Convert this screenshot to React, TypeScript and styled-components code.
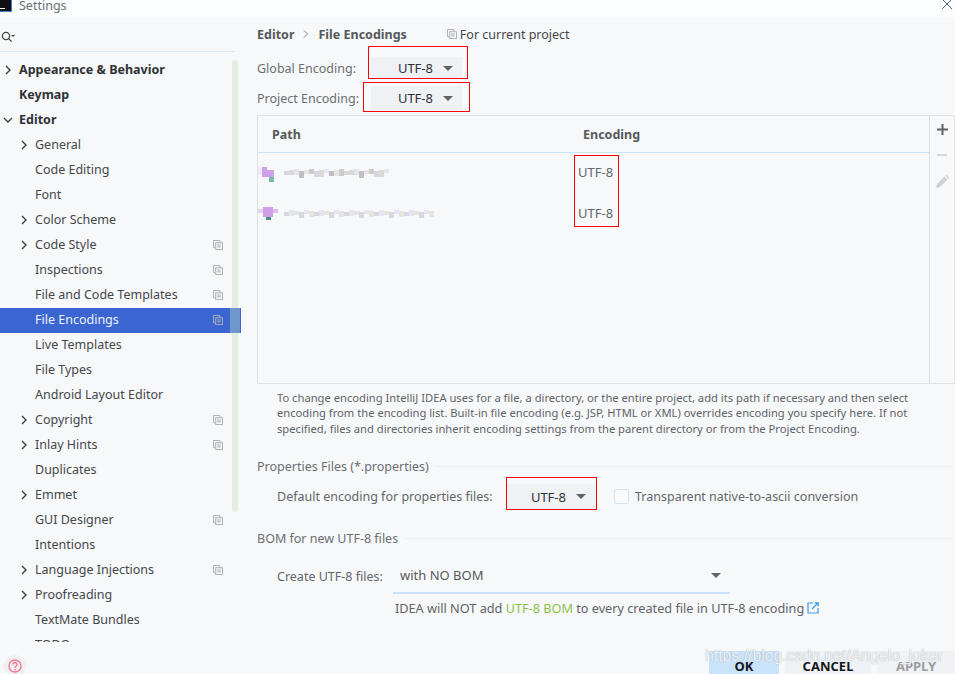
import React from "react";
import styled, { createGlobalStyle } from "styled-components";

const Global = createGlobalStyle`
  html, body { margin: 0; padding: 0; background: #f7f8fa; }
  * { box-sizing: border-box; }
`;

const Window = styled.div`
  position: relative;
  width: 955px;
  height: 674px;
  overflow: hidden;
  display: flex;
  flex-direction: column;
  background: #f7f8fa;
  font-family: "Noto Sans", "Open Sans", sans-serif;
  font-size: 12.5px;
  color: #3d4043;
`;
const TitleBar = styled.div`
  height: 18px;
  flex: none;
  background: #fcfdfe;
  display: flex;
  align-items: center;
  padding-right: 3px;
  overflow: hidden;
`;
const AppLogo = styled.div`
  width: 12px;
  height: 12px;
  margin-top: -7px;
  background: #111;
  border-right: 1px solid #3b7fd0;
  border-bottom: 1px solid #3b7fd0;
  flex: none;
  display: flex;
  align-items: flex-end;
  padding: 0 0 2px 0;
`;
const LogoBar = styled.div`
  width: 5px;
  height: 1px;
  background: #fff;
`;
const TitleText = styled.span`
  margin-left: 7px;
  margin-top: -8px;
  font-size: 12.5px;
  color: #6a7076;
`;
const CloseBox = styled.div`
  margin-left: auto;
  margin-top: -16px;
  height: 10px;
  color: #4f6670;
`;
const Main = styled.div`
  flex: 1;
  min-height: 0;
  display: flex;
`;
const Sidebar = styled.div`
  position: relative;
  width: 241px;
  flex: none;
  display: flex;
  flex-direction: column;
`;
const SearchRow = styled.div`
  height: 34px;
  flex: none;
  border-bottom: 1px solid #d5e6f6;
  display: flex;
  align-items: center;
  padding: 5px 0 0 1px;
  width: 234px;
  color: #43474b;
`;
const Tree = styled.div`
  flex: 1;
  min-height: 0;
  overflow: hidden;
  margin-top: 6px;
  margin-bottom: 32px;
`;
const Row = styled.div<{ $indent: number; $selected?: boolean; $bold?: boolean }>`
  height: 25px;
  display: flex;
  align-items: center;
  padding: 0 18px 2px ${(p) => p.$indent}px;
  background: ${(p) => (p.$selected ? "#3b66d2" : "transparent")};
  color: ${(p) => (p.$selected ? "#eef3fc" : p.$bold ? "#2f3236" : "#44474a")};
  font-weight: ${(p) => (p.$bold ? 700 : 400)};
  white-space: nowrap;
`;
const Arrow = styled.span`
  width: 16px;
  flex: none;
  display: flex;
  align-items: center;
  color: #3c3f42;
`;
const RowLabel = styled.span`
  flex: 1;
`;
const ProjectMark = styled.span`
  display: flex;
  color: #a9b0b6;
`;
const ScrollThumb = styled.div`
  position: absolute;
  left: 232px;
  top: 42px;
  width: 6px;
  height: 452px;
  border-radius: 3px;
  background: #e3efde;
`;
const SelectedThumb = styled.div`
  position: absolute;
  left: 230px;
  top: 290px;
  width: 10px;
  height: 25px;
  background: #6f97cc;
`;
const HelpButton = styled.div`
  position: absolute;
  left: 4px;
  top: 655px;
  width: 22px;
  height: 22px;
  border-radius: 50%;
  background: #eef0f4;
  display: flex;
  align-items: center;
  justify-content: center;
  color: #f4778f;
`;
const Content = styled.div`
  flex: 1;
  min-width: 0;
  display: flex;
  flex-direction: column;
  padding: 7px 0 0 16px;
`;
const Breadcrumb = styled.div`
  display: flex;
  align-items: center;
  height: 18px;
  font-weight: 700;
  color: #55585c;
`;
const CrumbSep = styled.span`
  display: flex;
  margin: 0 9px 0 9px;
  color: #808488;
`;
const ForProject = styled.span`
  display: flex;
  align-items: center;
  gap: 3px;
  margin-left: 40px;
  font-weight: 400;
  color: #44474a;
`;
const EncodingRow = styled.div<{ $top: number }>`
  display: flex;
  align-items: center;
  margin-top: ${(p) => p.$top}px;
  color: #6b6f73;
`;
const FieldLabel = styled.span<{ $width: number }>`
  width: ${(p) => p.$width}px;
  flex: none;
  white-space: nowrap;
`;
const Combo = styled.div<{ $width: number; $height: number; $pad: number }>`
  width: ${(p) => p.$width}px;
  height: ${(p) => p.$height}px;
  flex: none;
  background: #eff1f5;
  display: flex;
  align-items: center;
  justify-content: flex-end;
  gap: 10px;
  padding-right: ${(p) => p.$pad}px;
  font-size: 13px;
  color: #2f3236;
`;
const Caret = styled.span`
  width: 0;
  height: 0;
  border-left: 5px solid transparent;
  border-right: 5px solid transparent;
  border-top: 5px solid #5f6266;
  flex: none;
`;
const TablePanel = styled.div`
  margin-top: 5px;
  height: 269px;
  flex: none;
  display: flex;
  border: 1px solid #e0e1e3;
`;
const TableMain = styled.div`
  flex: 1;
  min-width: 0;
  display: flex;
  flex-direction: column;
  border-right: 1px solid #dcdddf;
`;
const TableHead = styled.div`
  height: 37px;
  flex: none;
  display: flex;
  align-items: center;
  border-bottom: 1px solid #cbe3f7;
  font-weight: 700;
  color: #55585c;
`;
const PathHead = styled.span`
  width: 325px;
  padding-left: 14px;
  flex: none;
`;
const TableRow = styled.div<{ $height: number }>`
  height: ${(p) => p.$height}px;
  display: flex;
  align-items: center;
  flex: none;
`;
const PathCell = styled.span`
  width: 320px;
  flex: none;
  display: flex;
`;
const EncodingCell = styled.span`
  font-size: 13px;
  color: #63676b;
`;
const TableTools = styled.div`
  width: 24px;
  flex: none;
  display: flex;
  flex-direction: column;
  align-items: center;
  padding-top: 3px;
  gap: 6px;
`;
const ToolIcon = styled.span`
  width: 20px;
  height: 20px;
  display: flex;
  align-items: center;
  justify-content: center;
`;
const HelpText = styled.p`
  margin: 6px 10px 0 20px;
  font-size: 11.2px;
  line-height: 15.4px;
  color: #5f6367;
`;
const SectionTitle = styled.div<{ $top: number }>`
  display: flex;
  align-items: center;
  gap: 6px;
  margin-top: ${(p) => p.$top}px;
  height: 18px;
  flex: none;
  color: #6b6f73;
  white-space: nowrap;
`;
const SectionRule = styled.span`
  flex: 1;
  height: 1px;
  background: #eff0f2;
`;
const SectionRow = styled.div<{ $top: number }>`
  display: flex;
  align-items: center;
  flex: none;
  margin-top: ${(p) => p.$top}px;
  padding-left: 20px;
  color: #63676b;
`;
const CheckBox = styled.span`
  width: 15px;
  height: 15px;
  flex: none;
  margin: 0 6px 0 17px;
  border: 1px solid #d2e5f7;
  border-radius: 2px;
  background: #f9fafc;
`;
const WideCombo = styled.div`
  width: 337px;
  height: 36px;
  flex: none;
  display: flex;
  align-items: center;
  justify-content: space-between;
  padding: 0 9px 0 7px;
  border-bottom: 2px solid #c5e1fb;
  font-size: 13px;
  color: #55585c;
`;
const Note = styled.div`
  margin: 5px 0 0 138px;
  display: flex;
  align-items: center;
  flex: none;
  gap: 3px;
  font-size: 12.7px;
  color: #5f6367;
  white-space: nowrap;
`;
const Green = styled.span`
  color: #8bc34a;
`;
const LinkIcon = styled.span`
  display: flex;
  color: #3d97e6;
`;
const Footer = styled.div`
  margin-top: auto;
  display: flex;
  justify-content: flex-end;
  gap: 6px;
  height: 23px;
  flex: none;
`;
const FootButton = styled.div<{ $width: number; $kind: "ok" | "cancel" | "apply" }>`
  width: ${(p) => p.$width}px;
  height: 23px;
  display: flex;
  align-items: flex-start;
  justify-content: center;
  padding-top: 6px;
  font-weight: 700;
  font-size: 13px;
  line-height: 18px;
  background: ${(p) => (p.$kind === "ok" ? "#c9e3fc" : p.$kind === "cancel" ? "#eef1f5" : "#f0f2f5")};
  color: ${(p) => (p.$kind === "apply" ? "#9a9c9f" : "#15171a")};
`;
const Watermark = styled.div`
  position: absolute;
  left: 705px;
  top: 646px;
  font-family: "Liberation Sans", Arial, sans-serif;
  font-size: 15.8px;
  line-height: 20px;
  color: rgba(255, 255, 255, 0.85);
  text-shadow: 0 0 1px rgba(120, 130, 140, 0.75);
  white-space: nowrap;
`;
const RedBox = styled.div<{ $l: number; $t: number; $w: number; $h: number }>`
  position: absolute;
  left: ${(p) => p.$l}px;
  top: ${(p) => p.$t}px;
  width: ${(p) => p.$w}px;
  height: ${(p) => p.$h}px;
  border: 1px solid #f00;
`;

const Chevron = ({ down }: { down?: boolean }) => (
  <svg width="10" height="10" viewBox="0 0 10 10" fill="none" stroke="currentColor" strokeWidth="1.4">
    {down ? <path d="M1 3l4 4 4-4" /> : <path d="M3 1l4 4-4 4" />}
  </svg>
);
const ProjectIcon = () => (
  <svg width="10" height="10" viewBox="0 0 11 11" fill="none" stroke="currentColor" strokeWidth="1.1">
    <path d="M2.500 8.500h-2v-8h7v2" />
    <rect x="3" y="3" width="7.500" height="7.500" />
    <path d="M4.500 5.500h4M4.500 7.500h4" />
  </svg>
);
const Blur = ({ width, seed, wide }: { width: number; seed: number; wide?: boolean }) => {
  const colors = ["#cdcad0", "#d5d8df", "#dcd8d6", "#e3e6ec", "#c2bec5", "#e8e3df"];
  const cells = Array.from({ length: Math.floor(width / 5) }, (_, i) => i);
  return (
    <svg width={width + 26} height="22" viewBox={`0 0 ${width + 26} 22`} shapeRendering="crispEdges">
      {wide ? (
        <>
          <rect x="0" y="7" width="5" height="4" fill="#e6d3f2" />
          <rect x="5" y="5" width="10" height="10" fill="#cf9fe8" />
          <rect x="15" y="7" width="5" height="4" fill="#dcbdf0" />
          <rect x="8" y="15" width="5" height="3" fill="#4f8c88" />
        </>
      ) : (
        <>
          <rect x="0" y="6" width="4" height="8" fill="#f0ebf4" />
          <rect x="4" y="6" width="5" height="10" fill="#cf9fe8" />
          <rect x="9" y="9" width="7" height="7" fill="#cf9fe8" />
          <rect x="11" y="16" width="5" height="5" fill="#79b8ad" />
        </>
      )}
      {cells.map((i) => (
        <rect
          key={i}
          x={26 + i * 5}
          y={10 - ((i * seed) % 3)}
          width="5"
          height={4 + ((i * seed) % 4)}
          fill={colors[(i * seed + 1) % colors.length]}
        />
      ))}
    </svg>
  );
};

type Item = { label: string; indent: number; arrow?: "r" | "d"; bold?: boolean; mark?: boolean; selected?: boolean };
const items: Item[] = [
  { label: "Appearance & Behavior", indent: 3, arrow: "r", bold: true },
  { label: "Keymap", indent: 19, bold: true },
  { label: "Editor", indent: 3, arrow: "d", bold: true },
  { label: "General", indent: 19, arrow: "r" },
  { label: "Code Editing", indent: 35 },
  { label: "Font", indent: 35 },
  { label: "Color Scheme", indent: 19, arrow: "r" },
  { label: "Code Style", indent: 19, arrow: "r", mark: true },
  { label: "Inspections", indent: 35, mark: true },
  { label: "File and Code Templates", indent: 35, mark: true },
  { label: "File Encodings", indent: 35, mark: true, selected: true },
  { label: "Live Templates", indent: 35 },
  { label: "File Types", indent: 35 },
  { label: "Android Layout Editor", indent: 35 },
  { label: "Copyright", indent: 19, arrow: "r", mark: true },
  { label: "Inlay Hints", indent: 19, arrow: "r", mark: true },
  { label: "Duplicates", indent: 35 },
  { label: "Emmet", indent: 19, arrow: "r" },
  { label: "GUI Designer", indent: 35, mark: true },
  { label: "Intentions", indent: 35 },
  { label: "Language Injections", indent: 19, arrow: "r", mark: true },
  { label: "Proofreading", indent: 19, arrow: "r" },
  { label: "TextMate Bundles", indent: 35 },
  { label: "TODO", indent: 35 },
];

export default function App() {
  return (
    <Window>
      <Global />
      <TitleBar>
        <AppLogo><LogoBar /></AppLogo>
        <TitleText>Settings</TitleText>
        <CloseBox>
          <svg width="10" height="10" viewBox="0 0 10 10" stroke="currentColor" strokeWidth="1" fill="none">
            <path d="M0 0l10 10M10 0L0 10" />
          </svg>
        </CloseBox>
      </TitleBar>
      <Main>
        <Sidebar>
          <SearchRow>
            <svg width="14" height="12" viewBox="0 0 14 12" fill="none" stroke="currentColor" strokeWidth="1.3">
              <circle cx="5" cy="5" r="3.6" />
              <path d="M7.600 7.600l3 3" />
              <path d="M10 4h4l-2 2z" fill="currentColor" stroke="none" />
            </svg>
          </SearchRow>
          <ScrollThumb />
          <Tree>
            {items.map((it) => (
              <Row key={it.label} $indent={it.indent} $bold={it.bold} $selected={it.selected}>
                {it.arrow && <Arrow><Chevron down={it.arrow === "d"} /></Arrow>}
                <RowLabel>{it.label}</RowLabel>
                {it.mark && <ProjectMark><ProjectIcon /></ProjectMark>}
              </Row>
            ))}
          </Tree>
          <SelectedThumb />
        </Sidebar>
        <Content>
          <Breadcrumb>
            Editor
            <CrumbSep>
              <svg width="6" height="8" viewBox="0 0 6 8" fill="none" stroke="currentColor"><path d="M1 0.500l3.500 3.500L1 7.500" /></svg>
            </CrumbSep>
            File Encodings
            <ForProject>
              <ProjectMark><ProjectIcon /></ProjectMark>
              For current project
            </ForProject>
          </Breadcrumb>
          <EncodingRow $top={14}>
            <FieldLabel $width={114}>Global Encoding:</FieldLabel>
            <Combo $width={91} $height={22} $pad={9}>UTF-8<Caret /></Combo>
          </EncodingRow>
          <EncodingRow $top={7}>
            <FieldLabel $width={114}>Project Encoding:</FieldLabel>
            <Combo $width={91} $height={24} $pad={9}>UTF-8<Caret /></Combo>
          </EncodingRow>
          <TablePanel>
            <TableMain>
              <TableHead>
                <PathHead>Path</PathHead>
                Encoding
              </TableHead>
              <TableRow $height={38}>
                <PathCell><Blur width={108} seed={1} /></PathCell>
                <EncodingCell>UTF-8</EncodingCell>
              </TableRow>
              <TableRow $height={44}>
                <PathCell><Blur width={150} seed={2} wide /></PathCell>
                <EncodingCell>UTF-8</EncodingCell>
              </TableRow>
            </TableMain>
            <TableTools>
              <ToolIcon>
                <svg width="11" height="11" viewBox="0 0 11 11" fill="#606366"><path d="M4.500 0h2v4.500H11v2H6.500V11h-2V6.500H0v-2h4.500z" /></svg>
              </ToolIcon>
              <ToolIcon>
                <svg width="10" height="2" viewBox="0 0 10 2" fill="#d5d6d8"><rect width="10" height="2" /></svg>
              </ToolIcon>
              <ToolIcon>
                <svg width="13" height="13" viewBox="0 0 13 13" fill="#cfd0d2"><path d="M0 13l1-4 7.500-7.500 3 3L4 12zM9.500 .5l1-.5 3 3-.8 1z" /></svg>
              </ToolIcon>
            </TableTools>
          </TablePanel>
          <HelpText>
            To change encoding IntelliJ IDEA uses for a file, a directory, or the entire project, add its path if necessary and then select encoding from the encoding list. Built-in file encoding (e.g. JSP, HTML or XML) overrides encoding you specify here. If not specified, files and directories inherit encoding settings from the parent directory or from the Project Encoding.
          </HelpText>
          <SectionTitle $top={21}>Properties Files (*.properties)<SectionRule /></SectionTitle>
          <SectionRow $top={9}>
            <FieldLabel $width={230}>Default encoding for properties files:</FieldLabel>
            <Combo $width={90} $height={25} $pad={11}>UTF-8<Caret /></Combo>
            <CheckBox />
            Transparent native-to-ascii conversion
          </SectionRow>
          <SectionTitle $top={20}>BOM for new UTF-8 files<SectionRule /></SectionTitle>
          <SectionRow $top={11}>
            <FieldLabel $width={116}>Create UTF-8 files:</FieldLabel>
            <WideCombo>with NO BOM<Caret /></WideCombo>
          </SectionRow>
          <Note>
            <span>IDEA will NOT add <Green>UTF-8 BOM</Green> to every created file in UTF-8 encoding</span>
            <LinkIcon>
              <svg width="12" height="12" viewBox="0 0 12 12" fill="none" stroke="currentColor" strokeWidth="1.2">
                <path d="M6 1H1v10h10V6" />
                <path d="M5 7l6-6M7.500 .8h3.700v3.700" />
              </svg>
            </LinkIcon>
          </Note>
          <Footer>
            <FootButton $width={70} $kind="ok">OK</FootButton>
            <FootButton $width={86} $kind="cancel">CANCEL</FootButton>
            <FootButton $width={78} $kind="apply">APPLY</FootButton>
          </Footer>
        </Content>
      </Main>
      <HelpButton>
        <svg width="14" height="14" viewBox="0 0 14 14" fill="none" stroke="currentColor" strokeWidth="1.4">
          <circle cx="7" cy="7" r="6" />
          <path d="M5 5.500a2 2 0 1 1 3 1.700c-.7.400-1 .8-1 1.500M7 10v1.200" />
        </svg>
      </HelpButton>
      <Watermark>https://blog.csdn.net/Angelo_joker</Watermark>
      <RedBox $l={368} $t={46} $w={100} $h={33} />
      <RedBox $l={363} $t={82} $w={107} $h={30} />
      <RedBox $l={574} $t={155} $w={45} $h={72} />
      <RedBox $l={506} $t={477} $w={91} $h={33} />
    </Window>
  );
}
